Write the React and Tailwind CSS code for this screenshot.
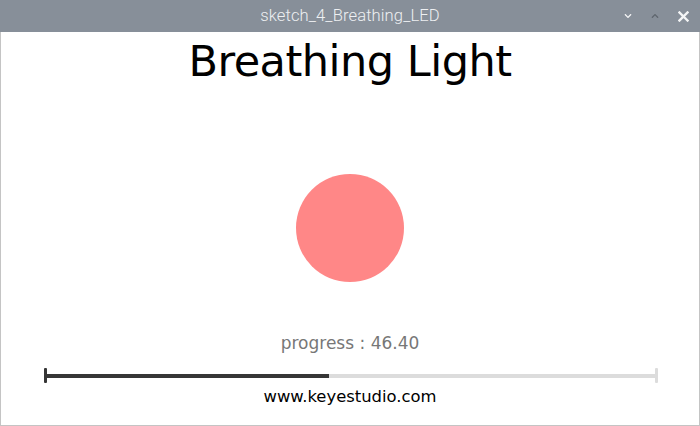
import { FaChevronDown, FaChevronUp } from "react-icons/fa";

const PROGRESS = 46.4;

export default function App() {
  return (
    <div className="w-[700px] h-[426px] flex flex-col bg-white overflow-hidden">
      {/* title bar */}
      <div className="h-8 shrink-0 grid grid-cols-[1fr_auto_1fr] items-center bg-[#878f99] font-['Roboto',sans-serif]">
        <div />
        <div className="text-[16.6px] font-light text-[#eef0f2] tracking-[0.1px]">sketch_4_Breathing_LED</div>
        <div className="flex justify-end items-center gap-[19px] pr-[11px] text-[#f4f5f6]">
          <FaChevronDown className="w-[8px] h-[8px]" />
          <FaChevronUp className="w-[8px] h-[8px] text-[#5f666e]" />
          <svg width="11" height="11" viewBox="0 0 11 11">
            <path d="M1.5 1.5 L9.5 9.5 M9.5 1.5 L1.5 9.5" stroke="#f4f5f6" strokeWidth="2.4" strokeLinecap="square" />
          </svg>
        </div>
      </div>

      {/* sketch canvas */}
      <div className="flex-1 flex flex-col items-center border-x border-b border-[#c4c4c4] font-['DejaVu_Sans',sans-serif]">
        <h1 className="mt-2 text-[43px] leading-none text-black tracking-[-0.5px]">Breathing Light</h1>

        <div className="mt-[91px] w-[108px] h-[108px] rounded-full bg-[#ff8787]" />

        <p className="mt-[53px] text-[17px] leading-none text-[#777]">progress : {PROGRESS.toFixed(2)}</p>

        <div className="mt-4 self-start ml-[43px] w-[614px] h-[15px] flex items-center">
          <div className="w-[3px] h-[15px] rounded-[1px] bg-[#363636]" />
          <div className="h-[4px] bg-[#363636]" style={{ width: `${(PROGRESS / 100) * 608}px` }} />
          <div className="flex-1 h-[4px] bg-[#dcdcdc]" />
          <div className="w-[3px] h-[15px] rounded-[1px] bg-[#dcdcdc]" />
        </div>

        <p className="mt-[6px] text-[16.4px] leading-none text-black">www.keyestudio.com</p>
      </div>
    </div>
  );
}
